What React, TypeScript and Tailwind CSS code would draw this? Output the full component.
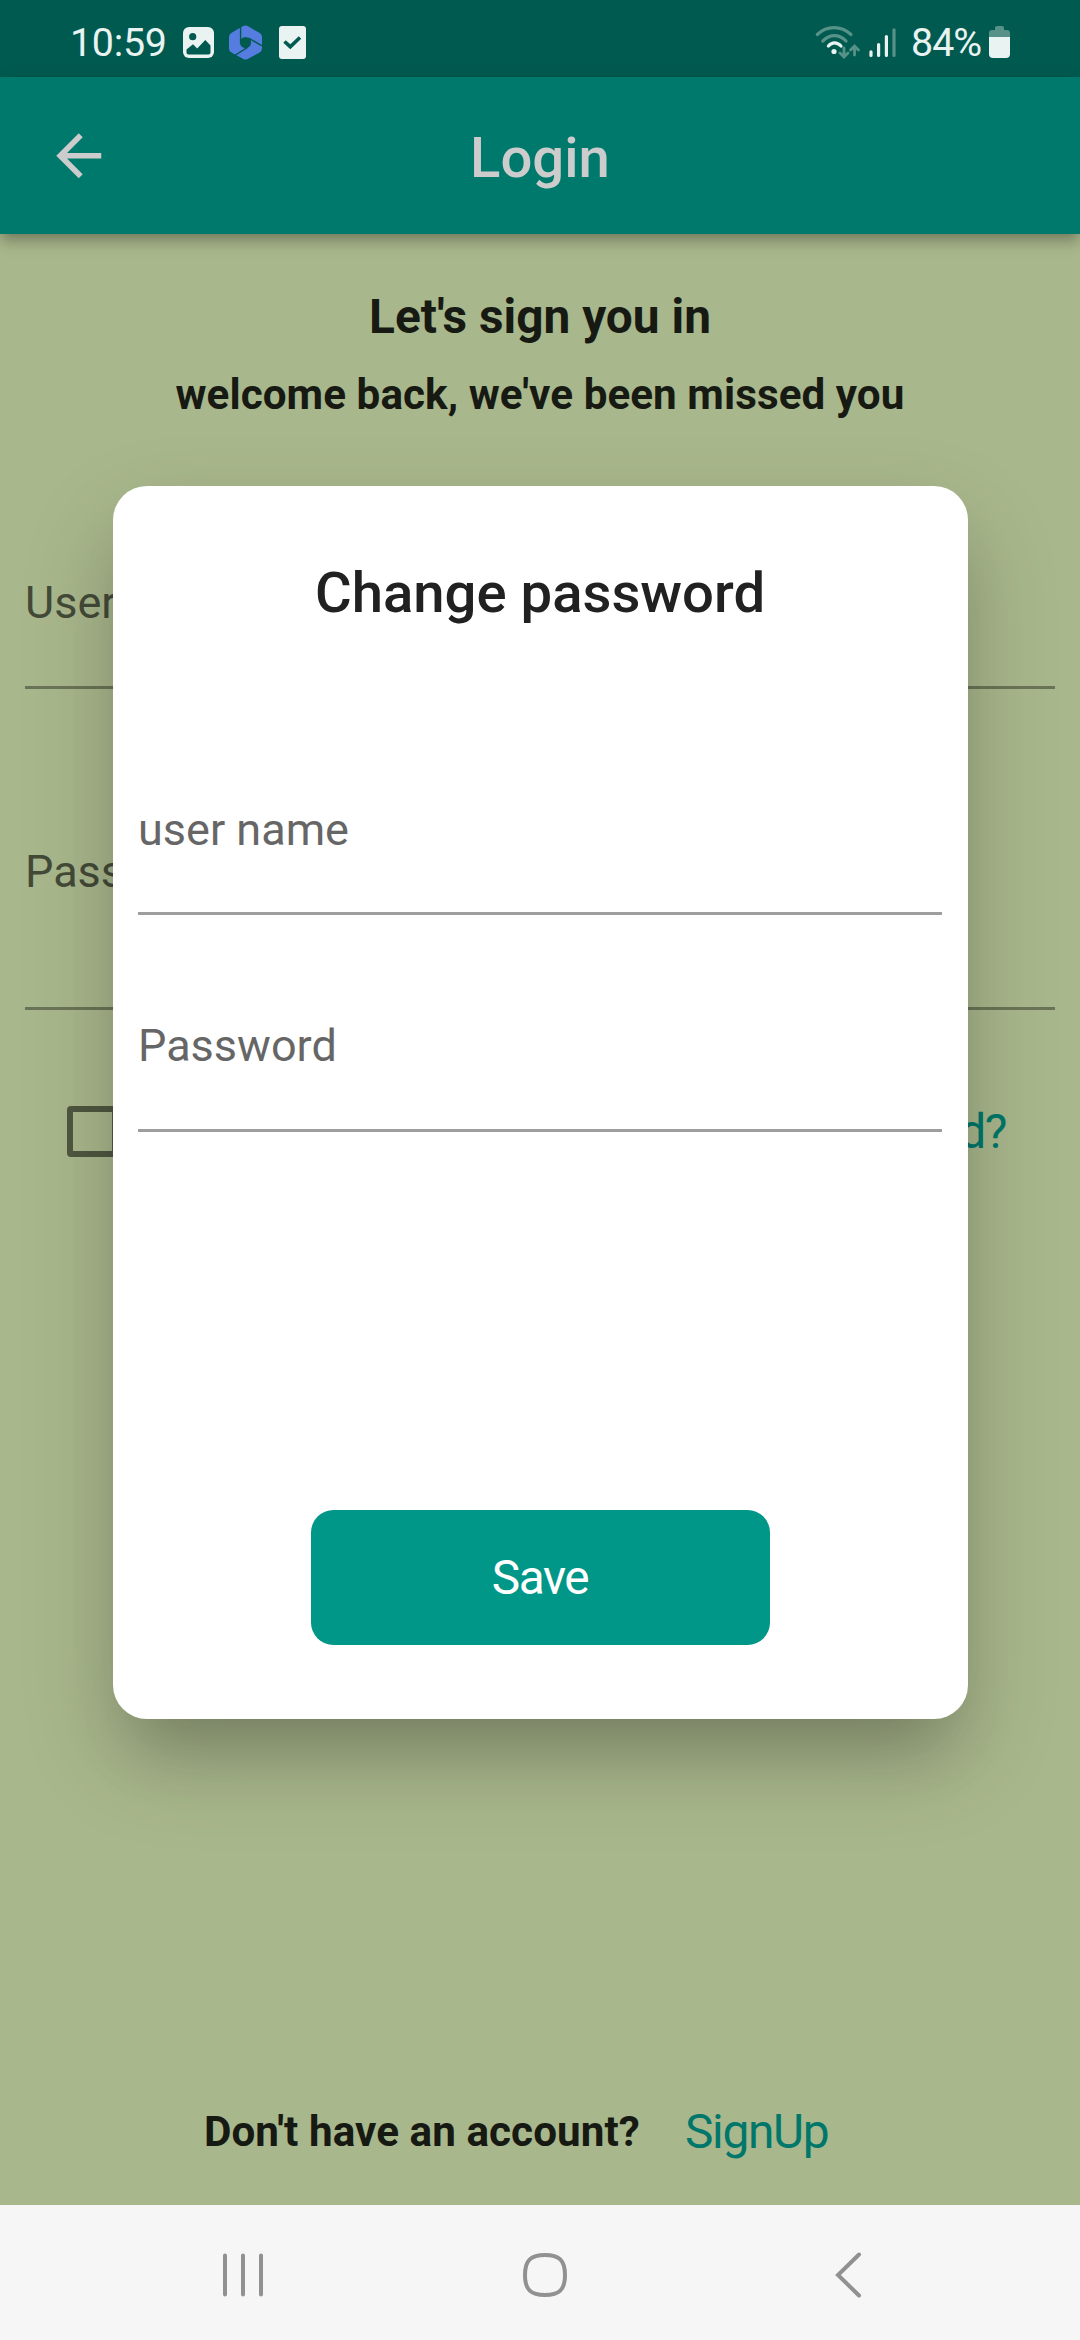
const ROBOTO = "font-['Roboto',sans-serif]";

function StatusBar() {
  return (
    <div className="flex h-[77px] shrink-0 items-start bg-[#005a50] text-[#e9f3f1]">
      <span className="ml-[70px] mt-[19px] w-[113px] whitespace-nowrap text-[39.4px] leading-[47px] tracking-[-0.3px]">10:59</span>
      <svg className="mt-[27px]" width="31" height="31" viewBox="0 0 31 31">
        <rect width="31" height="31" rx="6" fill="#e9f3f1" />
        <circle cx="9.7" cy="9.7" r="3.6" fill="#005a50" />
        <path d="M3.5 22.5 L10 17.3 L14.2 21.5 L22.3 13 L27.5 18.5 V25.5 Q27.5 27.5 25.5 27.5 H5.5 Q3.5 27.5 3.5 25.5 Z" fill="#005a50" />
      </svg>
      <svg className="ml-[15px] mt-[25px]" width="33" height="35" viewBox="0 0 33 35">
        <path d="M16.5 5 L28.5 12 V23.5 L16.5 30 L4.5 23.5 V12 Z" fill="#557cdf" stroke="#557cdf" strokeWidth="9" strokeLinejoin="round" />
        <circle cx="16.5" cy="17.5" r="5.6" fill="#005a50" />
        <path d="M11.6 18 V0 M19.5 13 L33 20.8 M18.5 22.3 L5 31" stroke="#005a50" strokeWidth="1.4" fill="none" />
      </svg>
      <svg className="ml-[17px] mt-[26px]" width="27" height="33" viewBox="0 0 27 33">
        <rect width="27" height="33" rx="3" fill="#e9f3f1" />
        <path d="M5.5 15.5 L11.3 20.7 L21 11.5" stroke="#005a50" strokeWidth="3.6" fill="none" />
      </svg>
      <svg className="ml-[509px] mt-[25px]" width="46" height="35" viewBox="0 0 46 35" fill="none">
        <g strokeWidth="3.2" strokeLinecap="round">
          <path d="M2.3 9.5 C12 0.3 26 0.3 36 9.5" stroke="#579289" />
          <path d="M7.8 16 C15 8.8 24 8.8 31 16" stroke="#579289" />
          <path d="M13.4 21 C17 16.8 22 16.8 26 21" stroke="#e9f3f1" />
          <path d="M29 23 V31 M25 28 L29 32 L33 28 M39.5 30 V21 M35.5 25 L39.5 21 L43.5 25" stroke="#579289" strokeWidth="2.8" />
        </g>
        <circle cx="19" cy="26.5" r="2.6" fill="#e9f3f1" />
      </svg>
      <svg className="ml-[8px] mt-[28px]" width="28" height="30" viewBox="0 0 28 30" strokeWidth="3.2" strokeLinecap="round">
        <path d="M2 23.8 V27.5 M9.6 16.5 V27.5 M17.4 8.5 V27.5" stroke="#e9f3f1" />
        <path d="M25 1.8 V27.5" stroke="#579289" />
      </svg>
      <span className="ml-[14px] mt-[19px] w-[78px] whitespace-nowrap text-[39.4px] leading-[47px] tracking-[-1px]">84%</span>
      <svg className="mt-[26px]" width="21" height="32" viewBox="0 0 21 32">
        <path d="M0 11 V7 Q0 4 3 4 H6 V2 Q6 0 8 0 H13 Q15 0 15 2 V4 H18 Q21 4 21 7 V11 Z" fill="#579289" />
        <path d="M0 11 H21 V28 Q21 32 17 32 H4 Q0 32 0 28 Z" fill="#e9f3f1" />
      </svg>
    </div>
  );
}

function AppBar() {
  return (
    <header className="relative z-10 grid h-[157px] shrink-0 grid-cols-[157px_1fr_157px] items-center bg-[#00796d] shadow-[0_6px_11px_-3px_rgba(0,0,0,0.2),0_11px_14px_0_rgba(0,0,0,0.1),0_3px_16px_0_rgba(0,0,0,0.1)]">
      <svg className="ml-[45px] mt-px" width="67.5" height="67.5" viewBox="0 0 24 24" fill="#cccccc">
        <path d="M20 11H7.83l5.59-5.59L12 4l-8 8 8 8 1.41-1.41L7.83 13H20v-2z" />
      </svg>
      <h1 className="pt-[4px] text-center text-[56.25px] font-medium leading-[66px] text-[#cccccc]">Login</h1>
    </header>
  );
}

function LoginPage() {
  return (
    <main className="flex flex-1 flex-col bg-[#a9b78c] px-[25px] pb-[45px] pt-[55px] text-[#171a13]">
      <h2 className="text-center text-[47.8px] font-bold leading-[56px]">Let's sign you in</h2>
      <p className="mt-[25px] text-center text-[42.19px] font-bold leading-[50px] tracking-[0.06px]">welcome back, we've been missed you</p>
      <div className="mt-[157px] h-[112px] border-b-[3px] border-[#6b7458] text-[45px] leading-[52px] text-[#444a38]">User name</div>
      <div className="mt-[157px] h-[164px] border-b-[3px] border-[#6b7458] text-[45px] leading-[52px] text-[#444a38]">Password</div>
      <div className="mt-[96px] flex h-[51px] items-center justify-between pl-[42px] pr-[49px]">
        <div className="size-[51px] rounded-[4px] border-[6px] border-[#4f573f]" />
        <span className="pt-[2px] text-[47.8px] leading-[51px] tracking-[-1.4px] text-[#00776a]">Forgot password?</span>
      </div>
      <div className="mt-auto flex h-[56px] items-center pl-[179px]">
        <span className="w-[481px] whitespace-nowrap text-[42.19px] font-bold leading-[50px] tracking-[0.06px]">Don't have an account?</span>
        <span className="text-[47.8px] leading-[56px] tracking-[-1.3px] text-[#00776a]">SignUp</span>
      </div>
    </main>
  );
}

function NavigationBar() {
  return (
    <nav className="flex h-[135px] shrink-0 items-start bg-[#f6f6f6] pt-[46px]">
      <svg className="ml-[222px]" width="42" height="48" viewBox="0 0 42 48" stroke="#919191" strokeWidth="4" strokeLinecap="round">
        <path d="M3 4.5 V43.5 M21 4.5 V43.5 M39 4.5 V43.5" />
      </svg>
      <svg className="ml-[258px]" width="46" height="48" viewBox="0 0 46 48" fill="none" stroke="#919191" strokeWidth="4">
        <path d="M23 4 C37 4 43 9 43 24 C43 39 37 44 23 44 C9 44 3 39 3 24 C3 9 9 4 23 4 Z" />
      </svg>
      <svg className="ml-[266px]" width="30" height="48" viewBox="0 0 30 48" fill="none" stroke="#919191" strokeWidth="4" strokeLinecap="round">
        <path d="M25 3.5 L4 24 L25 44.5" />
      </svg>
    </nav>
  );
}

function ChangePasswordDialog() {
  return (
    <section
      role="dialog"
      className="absolute left-[112.5px] top-[486px] z-20 flex h-[1232.5px] w-[855px] flex-col rounded-[34px] bg-white px-[25.5px] shadow-[0_40px_95px_0_rgba(0,0,0,0.18),0_46px_64px_-20px_rgba(0,0,0,0.16)]"
    >
      <h2 className="mt-[74px] text-center text-[56.25px] font-medium leading-[66px] text-[#212121]">Change password</h2>
      <div className="mt-[178px] h-[111px] border-b-[3px] border-[#9e9e9e] text-[45px] leading-[52px] text-[#666666]">user name</div>
      <div className="mt-[105px] h-[112px] border-b-[3px] border-[#9e9e9e] text-[45px] leading-[52px] text-[#666666]">Password</div>
      <button className="mx-auto mt-[378px] h-[135px] w-[459px] rounded-[22.5px] bg-[#009688] text-[47.8px] leading-[56px] tracking-[-1.4px] text-white">Save</button>
    </section>
  );
}

export default function App() {
  return (
    <div className={`relative flex h-[2340px] w-[1080px] flex-col overflow-hidden ${ROBOTO}`}>
      <StatusBar />
      <AppBar />
      <LoginPage />
      <NavigationBar />
      <ChangePasswordDialog />
    </div>
  );
}
